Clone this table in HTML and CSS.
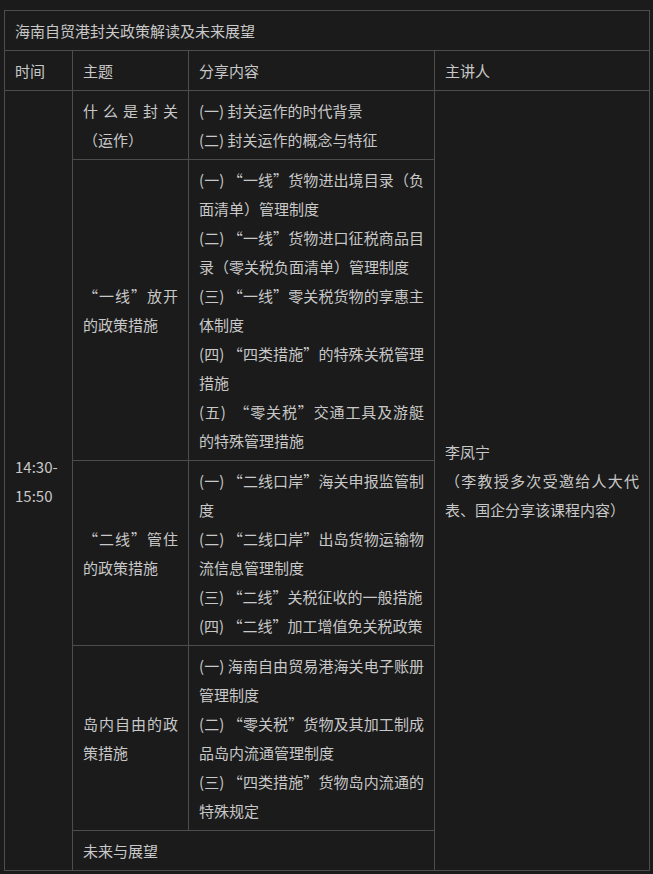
FILE: index.html
```
<!DOCTYPE html>
<html lang="zh-CN">
<head>
<meta charset="utf-8">
<title>海南自贸港封关政策解读及未来展望</title>
<link rel="stylesheet" href="styles.css">
</head>
<body>
<table class="schedule">
  <colgroup>
    <col class="c-time">
    <col class="c-topic">
    <col class="c-content">
    <col class="c-speaker">
  </colgroup>
  <tr>
    <td colspan="4">海南自贸港封关政策解读及未来展望</td>
  </tr>
  <tr>
    <td>时间</td>
    <td>主题</td>
    <td>分享内容</td>
    <td>主讲人</td>
  </tr>
  <tr>
    <td rowspan="5">14:30-15:50</td>
    <td class="topic">什么是封关（运作）</td>
    <td class="content">(一) 封关运作的时代背景<br>(二) 封关运作的概念与特征</td>
    <td rowspan="5">李凤宁<br>（李教授多次受邀给人大代表、国企分享该课程内容）</td>
  </tr>
  <tr>
    <td class="topic">“一线”放开的政策措施</td>
    <td class="content">(一) “一线”货物进出境目录（负面清单）管理制度<br>(二) “一线”货物进口征税商品目录（零关税负面清单）管理制度<br>(三) “一线”零关税货物的享惠主体制度<br>(四) “四类措施”的特殊关税管理措施<br>(五)&nbsp; “零关税”交通工具及游艇的特殊管理措施</td>
  </tr>
  <tr>
    <td class="topic">“二线”管住的政策措施</td>
    <td class="content">(一) “二线口岸”海关申报监管制度<br>(二) “二线口岸”出岛货物运输物流信息管理制度<br>(三) “二线”关税征收的一般措施<br>(四) “二线”加工增值免关税政策</td>
  </tr>
  <tr>
    <td class="topic">岛内自由的政策措施</td>
    <td class="content">(一) 海南自由贸易港海关电子账册管理制度<br>(二) “零关税”货物及其加工制成品岛内流通管理制度<br>(三) “四类措施”货物岛内流通的特殊规定</td>
  </tr>
  <tr>
    <td colspan="2">未来与展望</td>
  </tr>
</table>
</body>
</html>
```

FILE: styles.css
```
html, body {
  margin: 0;
  background: #1b1b1b;
}
body {
  padding: 10px 4px;
  font-family: "Noto Sans CJK SC", "Noto Sans", sans-serif;
  font-size: 15px;
  line-height: 29px;
  color: #c8c8c8;
}
.schedule {
  border-collapse: collapse;
  table-layout: fixed;
  width: 645px;
}
.c-time { width: 68px; }
.c-topic { width: 116px; }
.c-content { width: 246px; }
.c-speaker { width: 215px; }
.schedule td {
  border: 1px solid #4d4d4d;
  padding: 5px 10px;
  vertical-align: middle;
  text-align: justify;
}
```
